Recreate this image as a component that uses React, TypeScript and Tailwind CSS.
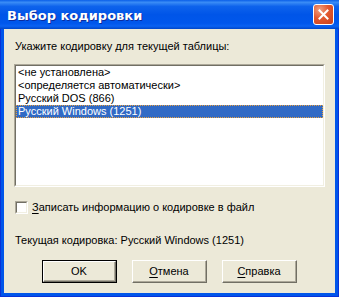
import React from "react";

const font = { fontFamily: '"Liberation Sans", Arial, sans-serif' };

function Btn({ children, def }: { children: React.ReactNode; def?: boolean }) {
  return (
    <div
      className={
        "w-[75px] h-[23px] " +
        (def ? "border border-black" : "")
      }
    >
      <div className="w-full h-full border-t border-l border-white border-r border-b border-r-[#716F64] border-b-[#716F64]">
        <div className="w-full h-full border-r border-b border-r-[#ACA899] border-b-[#ACA899] flex items-center justify-center text-[11px] text-black bg-[#ECE9D8]">
          {children}
        </div>
      </div>
    </div>
  );
}

export default function App() {
  const items = [
    "<не установлена>",
    "<определяется автоматически>",
    "Русский DOS (866)",
    "Русский Windows (1251)",
  ];
  return (
    <div className="w-[339px] h-[297px] flex flex-col bg-[#0055EA] select-none" style={font}>
      {/* Title bar */}
      <div className="h-[29px] shrink-0 flex items-center justify-between pl-[7px] pr-[5px] bg-[linear-gradient(to_bottom,#0A5FE8_0%,#3A8CF6_8%,#0E63EC_22%,#0055E8_50%,#0057EC_80%,#0A62F2_90%,#0046C8_100%)]">
        <span
          className="text-white font-bold text-[13px] leading-none mt-[2px]"
          style={{ textShadow: "1px 1px 0 #0B2C9E", fontFamily: '"DejaVu Sans", sans-serif' }}
        >
          Выбор кодировки
        </span>
        <div className="w-[21px] h-[21px] rounded-[3px] border border-white flex items-center justify-center bg-[radial-gradient(circle_at_30%_25%,#F0A080_0%,#E2582F_45%,#C8401C_100%)]">
          <svg width="11" height="11" viewBox="0 0 11 11">
            <path d="M1.5 1.5 L9.5 9.5 M9.5 1.5 L1.5 9.5" stroke="white" strokeWidth="2" strokeLinecap="square" />
          </svg>
        </div>
      </div>
      {/* Body with frame */}
      <div className="flex-1 flex px-[3px] pb-[3px] bg-[#0055EA] border-x border-b border-[#0831D9]">
        <div className="flex-1 bg-[#ECE9D8] flex flex-col pt-[11px] px-[10px] text-[11px] text-black">
          <div className="h-[13px] leading-[13px] pl-px">Укажите кодировку для текущей таблицы:</div>
          <div className="mt-[11px] h-[123px] border-t border-l border-[#ACA899] border-r border-b border-r-white border-b-white">
            <div className="w-full h-full border-t border-l border-[#716F64] border-r border-b border-r-[#F1EFE2] border-b-[#F1EFE2] bg-white">
              {items.map((t, i) =>
                i === 3 ? (
                  <div
                    key={i}
                    className="h-[13px] leading-[11px] bg-[#316AC5] text-white border border-dotted border-[#E8A040] pl-px"
                  >
                    {t}
                  </div>
                ) : (
                  <div key={i} className="h-[13px] leading-[13px] pl-[2px]">
                    {t}
                  </div>
                )
              )}
            </div>
          </div>
          <div className="mt-[14px] h-[13px] flex items-center">
            <div className="w-[13px] h-[13px] ml-px border-t border-l border-[#ACA899] border-r border-b border-r-white border-b-white">
              <div className="w-full h-full border-t border-l border-[#716F64] border-r border-b border-r-[#F1EFE2] border-b-[#F1EFE2] bg-white" />
            </div>
            <span className="ml-[4px] leading-[13px]">
              <span className="underline underline-offset-2">З</span>аписать информацию о кодировке в файл
            </span>
          </div>
          <div className="mt-[20px] h-[13px] leading-[13px] pl-px">
            Текущая кодировка: Русский Windows (1251)
          </div>
          <div className="mt-[13px] flex gap-[15px] pl-[28px]">
            <Btn def>OK</Btn>
            <Btn>
              <span>
                <span className="underline underline-offset-2">О</span>тмена
              </span>
            </Btn>
            <Btn>
              <span>
                <span className="underline underline-offset-2">С</span>правка
              </span>
            </Btn>
          </div>
        </div>
      </div>
    </div>
  );
}
